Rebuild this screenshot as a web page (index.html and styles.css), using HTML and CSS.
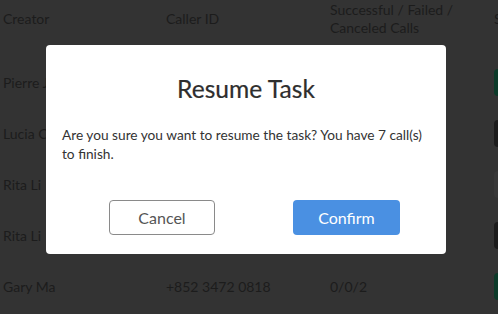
FILE: index.html
```html
<!DOCTYPE html>
<html>
<head>
<meta charset="utf-8">
<link rel="stylesheet" href="styles.css">
</head>
<body>
<div class="page">
  <div class="table">
    <div class="row head">
      <div class="cell">Creator</div>
      <div class="cell">Caller ID</div>
      <div class="cell">Successful / Failed /<br>Canceled Calls</div>
      <div class="cell">S</div>
    </div>
    <div class="row">
      <div class="cell">Pierre J</div>
      <div class="cell"></div>
      <div class="cell"></div>
      <div class="cell"><span class="badge green"></span></div>
    </div>
    <div class="row">
      <div class="cell">Lucia Chen</div>
      <div class="cell"></div>
      <div class="cell"></div>
      <div class="cell"><span class="badge dark"></span></div>
    </div>
    <div class="row">
      <div class="cell">Rita Li</div>
      <div class="cell"></div>
      <div class="cell"></div>
      <div class="cell"><span class="badge faint"></span></div>
    </div>
    <div class="row">
      <div class="cell">Rita Li</div>
      <div class="cell"></div>
      <div class="cell"></div>
      <div class="cell"><span class="badge dark"></span></div>
    </div>
    <div class="row">
      <div class="cell">Gary Ma</div>
      <div class="cell">+852 3472 0818</div>
      <div class="cell">0/0/2</div>
      <div class="cell"><span class="badge green"></span></div>
    </div>
  </div>

  <div class="modal">
    <h2 class="title">Resume Task</h2>
    <p class="msg">Are you sure you want to resume the task? You have 7 call(s)<br>to finish.</p>
    <div class="actions">
      <button class="btn cancel">Cancel</button>
      <button class="btn confirm">Confirm</button>
    </div>
  </div>
</div>
</body>
</html>
```
FILE: styles.css
```css
html, body {
  margin: 0;
  padding: 0;
}
body {
  width: 498px;
  height: 314px;
  overflow: hidden;
  background: #333333;
  font-family: Lato, "Open Sans", sans-serif;
}
.page {
  position: relative;
  width: 498px;
  height: 314px;
  overflow: hidden;
}
.table {
  display: flex;
  flex-direction: column;
  color: #1c1c1c;
  font-size: 14px;
}
.row {
  display: grid;
  grid-template-columns: 163px 164px 164px 7px;
  height: 51px;
  align-items: center;
}
.row.head {
  height: 57px;
  align-items: start;
  line-height: 18px;
}
.row.head .cell {
  padding-top: 1px;
  height: 36px;
  display: flex;
  align-items: center;
}
.cell {
  padding-left: 3px;
  white-space: nowrap;
  overflow: hidden;
}
.badge {
  display: block;
  width: 60px;
  height: 27px;
  border-radius: 4px;
}
.badge.green { background: #0c3a29; }
.badge.dark { background: #1c1c1c; }
.badge.faint { background: #383838; }

.modal {
  position: absolute;
  left: 46px;
  top: 45px;
  width: 400px;
  height: 209px;
  box-sizing: border-box;
  background: #ffffff;
  border-radius: 4px;
  padding: 30px 16px 19px 16px;
  display: flex;
  flex-direction: column;
}
.title {
  margin: 0;
  text-align: center;
  font-size: 24.6px;
  font-weight: 400;
  line-height: 28px;
  color: #2e2e2e;
  -webkit-text-stroke: 0.2px #2e2e2e;
}
.msg {
  margin: 22px 0 0 0;
  font-size: 13.7px;
  line-height: 19px;
  color: #333333;
  white-space: nowrap;
}
.actions {
  margin-top: auto;
  display: flex;
  gap: 78px;
  padding-left: 47px;
}
.btn {
  width: 106px;
  height: 35px;
  border-radius: 4px;
  font-family: Lato, "Open Sans", sans-serif;
  font-size: 16px;
  cursor: pointer;
  box-sizing: border-box;
}
.cancel {
  background: #ffffff;
  border: 1px solid #8a8a8a;
  color: #555555;
}
.confirm {
  width: 107px;
  background: #4a90e2;
  border: none;
  color: #ffffff;
}
```
